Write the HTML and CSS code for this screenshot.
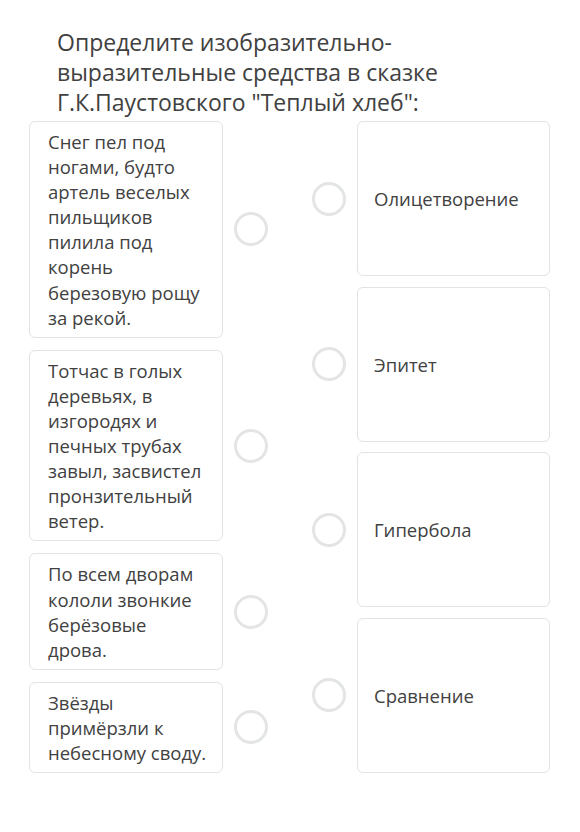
FILE: index.html
```html
<!DOCTYPE html>
<html lang="ru">
<head>
<meta charset="utf-8">
<link rel="stylesheet" href="styles.css">
</head>
<body>
<div class="page">
  <h1 class="title">Определите изобразительно-выразительные средства в сказке Г.К.Паустовского "Теплый хлеб":</h1>
  <div class="match">
    <div class="col col-left">
      <div class="item">
        <div class="card card-left">Снег пел под ногами, будто артель веселых пильщиков пилила под корень березовую рощу за рекой.</div>
        <span class="radio"></span>
      </div>
      <div class="item">
        <div class="card card-left">Тотчас в голых деревьях, в изгородях и печных трубах завыл, засвистел пронзительный ветер.</div>
        <span class="radio"></span>
      </div>
      <div class="item">
        <div class="card card-left">По всем дворам кололи звонкие берёзовые дрова.</div>
        <span class="radio"></span>
      </div>
      <div class="item">
        <div class="card card-left">Звёзды примёрзли к небесному своду.</div>
        <span class="radio"></span>
      </div>
    </div>
    <div class="col col-right">
      <div class="item item-right">
        <span class="radio"></span>
        <div class="card card-right">Олицетворение</div>
      </div>
      <div class="item item-right">
        <span class="radio"></span>
        <div class="card card-right">Эпитет</div>
      </div>
      <div class="item item-right">
        <span class="radio"></span>
        <div class="card card-right">Гипербола</div>
      </div>
      <div class="item item-right">
        <span class="radio"></span>
        <div class="card card-right">Сравнение</div>
      </div>
    </div>
  </div>
</div>
</body>
</html>
```

FILE: styles.css
```css
html, body {
  margin: 0;
  padding: 0;
  background: #ffffff;
}

body {
  font-family: "Open Sans", "Noto Sans", sans-serif;
  color: #414141;
}

.page {
  padding: 27px 30px 0 29px;
}

.title {
  margin: 0 0 4px 28px;
  font-size: 23px;
  line-height: 30px;
  font-weight: 400;
  color: #414141;
  width: 460px;
}

.match {
  display: flex;
  align-items: stretch;
  gap: 44px;
}

.col {
  display: flex;
  flex-direction: column;
}

.col-left {
  gap: 12px;
}

.col-right {
  gap: 10.5px;
}

.item {
  display: flex;
  align-items: center;
  gap: 11px;
}

.item-right {
  flex: 1;
  align-items: center;
}

.card {
  box-sizing: border-box;
  background: #ffffff;
  border: 1px solid #e2e4e4;
  border-radius: 6px;
  font-size: 18.5px;
  line-height: 25.1px;
  color: #414141;
}

.card-left {
  width: 194px;
  padding: 7px 12px 7px 18px;
}

.card-right {
  width: 193px;
  align-self: stretch;
  padding: 0 16px;
  display: flex;
  align-items: center;
}

.radio {
  flex: none;
  box-sizing: border-box;
  width: 34px;
  height: 34px;
  border: 3px solid #e3e5e5;
  border-radius: 50%;
  background: #ffffff;
}
```
